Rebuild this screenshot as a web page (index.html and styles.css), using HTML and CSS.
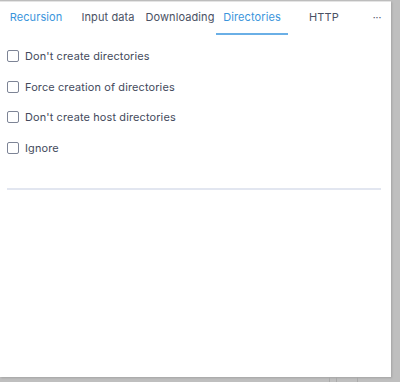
FILE: index.html
```html
<!DOCTYPE html>
<html lang="en">

<head>
    <meta charset="UTF-8">
    <meta name="viewport" content="width=device-width, initial-scale=1.0">
    <title>Directories</title>
    <link rel="stylesheet" href="styles.css">
</head>

<body>

    <div class="panel">
        <nav class="tabs">
            <a href="#" class="tab blue">Recursion</a>
            <a href="#" class="tab">Input data</a>
            <a href="#" class="tab">Downloading</a>
            <a href="#" class="tab blue active">Directories</a>
            <a href="#" class="tab">HTTP</a>
            <a href="#" class="more">&middot;&middot;&middot;</a>
        </nav>

        <div class="options">
            <label class="option"><span class="box"></span>Don't create directories</label>
            <label class="option"><span class="box"></span>Force creation of directories</label>
            <label class="option"><span class="box"></span>Don't create host directories</label>
            <label class="option"><span class="box"></span>Ignore</label>
        </div>

        <hr class="divider">
    </div>

    <!-- bits of the window behind -->
    <div class="behind">
        <span class="mark m1"></span>
        <span class="mark m2"></span>
        <span class="mark m3"></span>
    </div>

</body>

</html>
```

FILE: styles.css
```css
body {
    margin: 0;
    padding: 0;
    background-color: #bfbfbf;
    font-family: Inter, "Noto Sans", sans-serif;
    width: 400px;
    height: 382px;
    overflow: hidden;
    position: relative;
}

.panel {
    background-color: #fff;
    width: 391px;
    height: 376px;
    box-sizing: border-box;
    border-top: 1px solid #e4e4e4;
    margin-top: 1px;
    box-shadow: 1px 1px 2px rgba(0, 0, 0, 0.15);
}

.tabs {
    display: flex;
    height: 32px;
    padding-top: 1px;
    margin-right: 3px;
}

.tab {
    width: 72px;
    flex: none;
    text-align: center;
    color: #4a5163;
    text-decoration: none;
    font-size: 11px;
    line-height: 29px;
    box-sizing: border-box;
    border-bottom: 2px solid transparent;
    letter-spacing: 0.1px;
}

.tab.blue {
    color: #3a95dc;
}

.tab.active {
    border-bottom-color: #6aafe6;
}

.more {
    flex: 1;
    text-align: center;
    color: #4a5163;
    text-decoration: none;
    font-size: 10px;
    line-height: 28px;
    padding-left: 6px;
}

.options {
    display: flex;
    flex-direction: column;
    gap: 18px;
    padding: 15px 0 0 7px;
}

.option {
    display: flex;
    align-items: center;
    gap: 6px;
    font-size: 10.9px;
    color: #434a5c;
    line-height: 12.5px;
    letter-spacing: 0.15px;
}

.box {
    width: 10px;
    height: 10px;
    border: 1px solid #7d8496;
    border-radius: 2px;
    flex: none;
}

.divider {
    border: none;
    height: 2px;
    background-color: #e2e6f0;
    margin: 34px 10px 0 7px;
}

.behind .mark {
    position: absolute;
    top: 377px;
    width: 1px;
    height: 5px;
    background-color: #aaa;
}

.m1 { left: 329px; }
.m2 { left: 336px; }
.m3 { left: 357px; }
```
